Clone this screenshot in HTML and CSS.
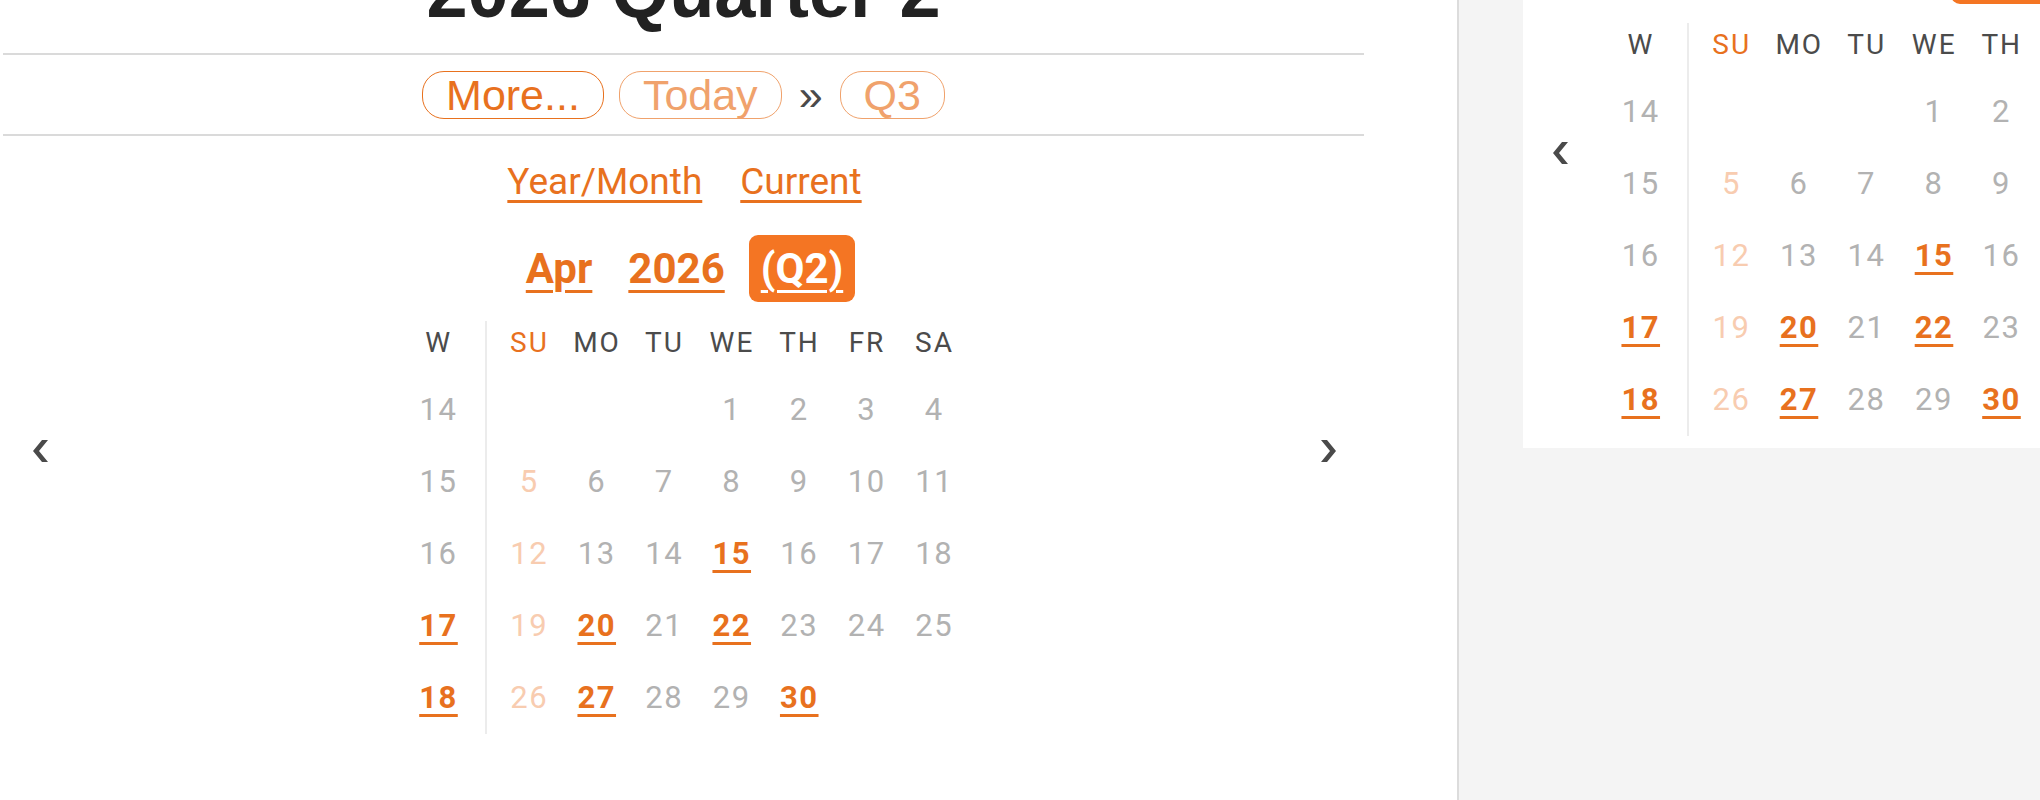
FILE: index.html
```html
<!DOCTYPE html>
<html lang="en">
<head>
<meta charset="utf-8">
<title>2026 Quarter 2</title>
<link rel="stylesheet" href="styles.css">
</head>
<body>
<div class="page">
  <section class="main-col">
    <div class="panel">
      <h1 class="title">2026 Quarter 2</h1>
      <div class="toolbar">
        <a class="pill pill-strong">More...</a>
        <a class="pill pill-soft">Today</a>
        <span class="raquo">»</span>
        <a class="pill pill-soft">Q3</a>
      </div>
      <div class="widget widget-main">
        <svg class="arrow" width="15" height="22" viewBox="0 0 15 22"><polygon points="9,0 15,0 6,11 15,22 9,22 0,11"/></svg>
        <div class="cal">
          <nav class="links"><a>Year/Month</a><a>Current</a></nav>
          <div class="ym"><a class="ym-item">Apr</a><a class="ym-item">2026</a><a class="ym-item ym-active">(Q2)</a></div>
          <div class="grid">
            <div class="weeks">
              <div class="hd">W</div>
              <div class="cell">14</div>
              <div class="cell">15</div>
              <div class="cell">16</div>
              <div class="cell"><a class="hit">17</a></div>
              <div class="cell"><a class="hit">18</a></div>
            </div>
            <div class="days">
              <div class="hd sun">SU</div><div class="hd">MO</div><div class="hd">TU</div><div class="hd">WE</div><div class="hd">TH</div><div class="hd">FR</div><div class="hd">SA</div>
              <div class="cell"></div><div class="cell"></div><div class="cell"></div><div class="cell">1</div><div class="cell">2</div><div class="cell">3</div><div class="cell">4</div>
              <div class="cell sun">5</div><div class="cell">6</div><div class="cell">7</div><div class="cell">8</div><div class="cell">9</div><div class="cell">10</div><div class="cell">11</div>
              <div class="cell sun">12</div><div class="cell">13</div><div class="cell">14</div><div class="cell"><a class="hit">15</a></div><div class="cell">16</div><div class="cell">17</div><div class="cell">18</div>
              <div class="cell sun">19</div><div class="cell"><a class="hit">20</a></div><div class="cell">21</div><div class="cell"><a class="hit">22</a></div><div class="cell">23</div><div class="cell">24</div><div class="cell">25</div>
              <div class="cell sun">26</div><div class="cell"><a class="hit">27</a></div><div class="cell">28</div><div class="cell">29</div><div class="cell"><a class="hit">30</a></div><div class="cell"></div><div class="cell"></div>
            </div>
          </div>
        </div>
        <svg class="arrow" width="15" height="22" viewBox="0 0 15 22"><polygon points="0,0 6,0 15,11 6,22 0,22 9,11"/></svg>
      </div>
    </div>
  </section>
  <section class="side">
    <div class="widget widget-card">
      <svg class="arrow" width="15" height="22" viewBox="0 0 15 22"><polygon points="9,0 15,0 6,11 15,22 9,22 0,11"/></svg>
      <div class="cal">
        <nav class="links"><a>Year/Month</a><a>Current</a></nav>
        <div class="ym"><a class="ym-item">Apr</a><a class="ym-item">2026</a><a class="ym-item ym-active">(Q2)</a></div>
        <div class="grid">
          <div class="weeks">
            <div class="hd">W</div>
            <div class="cell">14</div>
            <div class="cell">15</div>
            <div class="cell">16</div>
            <div class="cell"><a class="hit">17</a></div>
            <div class="cell"><a class="hit">18</a></div>
          </div>
          <div class="days">
            <div class="hd sun">SU</div><div class="hd">MO</div><div class="hd">TU</div><div class="hd">WE</div><div class="hd">TH</div><div class="hd">FR</div><div class="hd">SA</div>
            <div class="cell"></div><div class="cell"></div><div class="cell"></div><div class="cell">1</div><div class="cell">2</div><div class="cell">3</div><div class="cell">4</div>
            <div class="cell sun">5</div><div class="cell">6</div><div class="cell">7</div><div class="cell">8</div><div class="cell">9</div><div class="cell">10</div><div class="cell">11</div>
            <div class="cell sun">12</div><div class="cell">13</div><div class="cell">14</div><div class="cell"><a class="hit">15</a></div><div class="cell">16</div><div class="cell">17</div><div class="cell">18</div>
            <div class="cell sun">19</div><div class="cell"><a class="hit">20</a></div><div class="cell">21</div><div class="cell"><a class="hit">22</a></div><div class="cell">23</div><div class="cell">24</div><div class="cell">25</div>
            <div class="cell sun">26</div><div class="cell"><a class="hit">27</a></div><div class="cell">28</div><div class="cell">29</div><div class="cell"><a class="hit">30</a></div><div class="cell"></div><div class="cell"></div>
          </div>
        </div>
      </div>
      <svg class="arrow" width="15" height="22" viewBox="0 0 15 22"><polygon points="0,0 6,0 15,11 6,22 0,22 9,11"/></svg>
    </div>
  </section>
</div>
</body>
</html>
```

FILE: styles.css
```css
html, body {
  margin: 0;
  padding: 0;
  height: 800px;
  overflow: hidden;
  background: #ffffff;
}

.page {
  display: flex;
  height: 800px;
  font-family: Roboto, "Liberation Sans", Arial, sans-serif;
}

.main-col {
  width: 1457px;
  flex: none;
  background: #ffffff;
  border-right: 2px solid #dcdcdc;
}

.panel {
  width: 1361px;
  margin-left: 3px;
}

.title {
  margin: -45px 0 24px;
  font-family: "Liberation Sans", Arial, sans-serif;
  font-weight: 700;
  font-size: 74px;
  line-height: 74px;
  height: 74px;
  text-align: center;
  color: #222222;
}

.toolbar {
  height: 79px;
  border-top: 2px solid #dadada;
  border-bottom: 2px solid #dadada;
  display: flex;
  align-items: center;
  justify-content: center;
  gap: 15px;
  font-family: "Liberation Sans", Arial, sans-serif;
  font-size: 43px;
}

.pill {
  display: block;
  height: 46px;
  line-height: 46px;
  padding: 0 23px;
  border-radius: 22px;
  border: 1.5px solid currentColor;
}

.pill-strong { color: #e8711e; }
.pill-soft { color: #f0a26c; }

.raquo {
  color: #4a4a4a;
  line-height: 46px;
  padding: 0 2px;
}

.widget {
  display: flex;
  align-items: center;
}

.widget-main {
  justify-content: space-between;
  padding: 24px 28px 0 30px;
}

.widget-card {
  width: max-content;
  margin: -162px 0 0 64px;
  padding: 24px 30px 12px;
  gap: 36px;
  background: #ffffff;
}

.arrow {
  display: block;
  flex: none;
  margin-top: 8px;
  fill: #4a4a4a;
}

.cal {
  width: 565.5px;
  flex: none;
}

.links {
  display: flex;
  justify-content: center;
  gap: 38px;
  font-size: 37px;
  line-height: 44px;
  height: 44px;
}

.links a {
  color: #e8711e;
  text-decoration: underline;
  text-decoration-thickness: 2.5px;
  text-underline-offset: 6px;
}

.ym {
  display: flex;
  justify-content: center;
  gap: 12px;
  margin-top: 31px;
  height: 67px;
  font-size: 42px;
  font-weight: 700;
  line-height: 67px;
}

.ym-item {
  padding: 0 12px;
  color: #e8711e;
  text-decoration: underline;
  text-decoration-thickness: 3px;
  text-underline-offset: 7px;
  border-radius: 9px;
}

.ym-active {
  background: #f47523;
  color: #ffffff;
}

.grid {
  display: flex;
  margin-top: 19px;
}

.weeks {
  width: 72px;
  padding-right: 11px;
  border-right: 2px solid #ececec;
}

.days {
  padding-left: 8px;
  display: grid;
  grid-template-columns: repeat(7, 67.5px);
}

.hd {
  height: 53px;
  line-height: 44px;
  text-align: center;
  font-size: 28px;
  letter-spacing: 2px;
  text-indent: 2px;
  color: #4b4b4b;
}

.hd.sun { color: #e8711e; }

.cell {
  height: 72px;
  line-height: 72px;
  text-align: center;
  font-size: 31px;
  letter-spacing: 1.5px;
  text-indent: 1.5px;
  color: #b2b2b2;
}

.cell.sun { color: #f8ccb0; }

.hit {
  color: #e8711e;
  font-weight: 700;
  text-decoration: underline;
  text-decoration-thickness: 2.5px;
  text-underline-offset: 6px;
}

.side {
  flex: 1;
  min-width: 0;
  background: #f4f4f4;
  overflow: hidden;
}
```
